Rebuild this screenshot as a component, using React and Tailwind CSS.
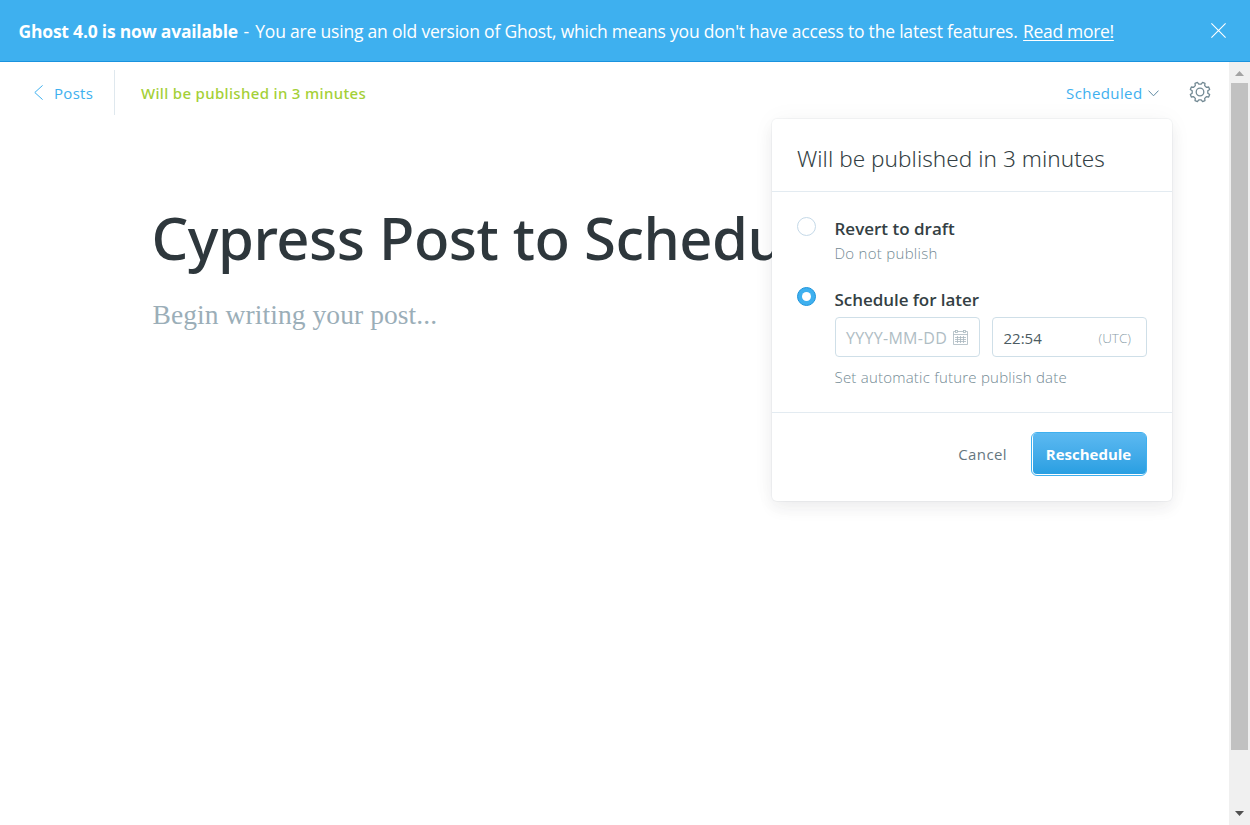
function Banner() {
  return (
    <div className="flex h-[62px] shrink-0 items-center justify-between border-b border-[#1a93de] bg-[#3eb0ef] pr-6 pl-[18.5px] text-[17.5px] whitespace-nowrap text-white">
      <p className="flex gap-[5.5px] pt-[2px]">
        <strong className="font-bold tracking-[-0.21px]">Ghost 4.0 is now available</strong>
        <span className="tracking-[-0.2px]">
          <span className="mr-[2px]">-</span> You are using an old version of Ghost, which means you don't have access to the latest features.
        </span>
        <a className="tracking-[-0.32px] underline decoration-1 underline-offset-2">Read more!</a>
      </p>
      <svg className="size-[15px]" viewBox="0 0 15 15" fill="none" stroke="currentColor" strokeWidth="1.1">
        <path d="M.4.4l14.2 14.2M14.6.4.4 14.6" />
      </svg>
    </div>
  );
}

const gearPath = (() => {
  const points = [];
  for (let i = 0; i < 8; i++) {
    const base = (i * Math.PI) / 4 + Math.PI / 8;
    [[-0.13, 10], [0.13, 10], [0.24, 7.9], [0.545, 7.9]].forEach(([offset, radius]) => {
      const angle = base + offset;
      points.push(`${(Math.cos(angle) * radius).toFixed(2)} ${(Math.sin(angle) * radius).toFixed(2)}`);
    });
  }
  return `M${points.join("L")}Z`;
})();

function GearIcon() {
  return (
    <svg className="size-[22px]" viewBox="-11 -11 22 22" fill="none" stroke="#738a94" strokeWidth="1.3" strokeLinejoin="round">
      <circle r="3.8" />
      <path d={gearPath} />
    </svg>
  );
}

function CalendarIcon() {
  return (
    <svg className="size-[15px]" viewBox="0 0 15 15" fill="none" stroke="#a9b8bf" strokeWidth="0.8">
      <path d="M.5 1.500h14v13H.5zM.5 4.500h14M4.500 6v7M7.500 6v7M10.500 6v7M2 7.500h11M2 9.500h11M2 11.500h11" />
      <rect x="2.5" y=".5" width="2" height="2" fill="#fff" />
      <rect x="10.500" y=".5" width="2" height="2" fill="#fff" />
    </svg>
  );
}

function Header() {
  return (
    <header className="flex h-[62px] items-center pr-[18px] pl-[34px] text-[15px] whitespace-nowrap">
      <a className="flex items-center text-[#3eb0ef]">
        <svg className="mr-[11px] mb-px h-[15px] w-[9px]" viewBox="0 0 9 15" fill="none" stroke="currentColor" strokeWidth="1">
          <path d="M8.6.4.8 7.5l7.8 7.1" />
        </svg>
        <span className="w-[39px] tracking-[0.3px]">Posts</span>
      </a>
      <span className="mb-[2px] ml-[21px] h-[45px] w-px bg-[#dfe8ee]" />
      <span className="ml-[26px] font-['Noto_Sans',sans-serif] font-medium tracking-[0.33px] text-[#a4d037]">
        Will be published in 3 minutes
      </span>
      <button className="ml-auto flex items-center text-[#3eb0ef]">
        <span className="tracking-[0.4px]">Scheduled</span>
        <svg className="mt-px ml-[5px] h-[7px] w-[11px]" viewBox="0 0 11 7" fill="none" stroke="#5f8aa3" strokeWidth="1">
          <path d="M.5.6l5 5.2 5-5.2" />
        </svg>
      </button>
      <button className="ml-[30.5px] pb-[2px]">
        <GearIcon />
      </button>
    </header>
  );
}

function Radio({ checked }) {
  return checked ? (
    <span className="-mt-px flex size-[19px] shrink-0 items-center justify-center rounded-full border border-[#1f95dc] bg-[#3eb0ef]">
      <span className="size-[9px] rounded-full bg-white" />
    </span>
  ) : (
    <span className="size-[19px] shrink-0 rounded-full border border-[#c5d9e8] bg-white" />
  );
}

function ScheduleMenu() {
  return (
    <section className="absolute top-[57px] left-[772px] w-[400px] rounded-[5px] bg-white whitespace-nowrap shadow-[0_0_0_1px_rgba(99,114,130,0.06),0_8px_16px_rgba(27,39,51,0.06),0_0_24px_rgba(27,39,51,0.04)]">
      <h2 className="h-[73px] border-b border-[#e3ebf1] pt-[23px] pl-[25px] font-['Noto_Sans',sans-serif] text-[22.5px] leading-[34px] font-light tracking-[0.06px] text-[#343f44]">
        Will be published in 3 minutes
      </h2>
      <div className="flex h-[221px] flex-col border-b border-[#e3ebf1] px-[25px] pt-[25px]">
        <div className="flex h-[71px] gap-[18.5px]">
          <Radio />
          <div>
            <p className="text-[17px] leading-6 font-semibold text-[#343f44]">Revert to draft</p>
            <p className="text-[15px] leading-[24px] font-light tracking-[0.28px] text-[#738a94]">Do not publish</p>
          </div>
        </div>
        <div className="flex gap-[18.5px]">
          <Radio checked />
          <div>
            <p className="text-[17px] leading-6 font-semibold tracking-[-0.05px] text-[#343f44]">Schedule for later</p>
            <div className="mt-[5px] -mr-px ml-[0.5px] flex gap-3 text-[15px]">
              <div className="flex h-10 w-[145px] items-center justify-between rounded-[4px] border border-[#cfdfe8] pr-[11px] pl-[10px]">
                <span className="mt-[2px] text-[16px] tracking-[0.3px] text-[#afbdc4]">YYYY-MM-DD</span>
                <CalendarIcon />
              </div>
              <div className="flex h-10 w-[155px] items-center justify-between rounded-[4px] border border-[#cfdfe8] pr-[15px] pl-[10.5px]">
                <span className="mt-[2px] text-[#4c5b62]">22:54</span>
                <span className="mt-[2px] text-[13.5px] font-light text-[#8b9ea8]">(UTC)</span>
              </div>
            </div>
            <p className="mt-[8px] text-[15px] leading-[24px] font-light tracking-[0.22px] text-[#738a94]">
              Set automatic future publish date
            </p>
          </div>
        </div>
      </div>
      <div className="flex h-[88px] justify-end pt-[19px] pr-[25px] text-[15px]">
        <button className="mr-[24px] h-[44px] tracking-[0.4px] text-[#66777f]">Cancel</button>
        <button className="flex h-[44px] w-[116px] rounded-[6px] border border-[#3eb0ef] bg-white p-px pt-0 pr-0">
          <span className="flex h-[41px] flex-1 items-center justify-center rounded-[4px] bg-linear-to-b from-[#5bb9f1] to-[#289fe2] pt-[2px] pr-[2px] font-bold text-white">
            Reschedule
          </span>
        </button>
      </div>
    </section>
  );
}

function Scrollbar() {
  return (
    <div className="flex w-[21px] shrink-0 flex-col items-center bg-[#f0f0f0]">
      <svg className="h-[21px] w-[9px]" viewBox="0 0 9 21" fill="#a3a3a3">
        <path d="M0 14 4.5 9 9 14Z" />
      </svg>
      <div className="h-[667px] w-[17px] bg-[#c1c1c1]" />
      <svg className="mt-auto h-[21px] w-[9px]" viewBox="0 0 9 21" fill="#505050">
        <path d="M0 7 4.500 12 9 7Z" />
      </svg>
    </div>
  );
}

export default function App() {
  return (
    <div className="flex h-screen flex-col overflow-hidden bg-white font-['Open_Sans','Noto_Sans',sans-serif]">
      <Banner />
      <div className="flex min-h-0 flex-1">
        <main className="relative min-w-0 flex-1">
          <Header />
          <article className="pt-[74px] pl-[151.5px]">
            <h1 className="h-[80px] w-[772px] overflow-hidden font-['Noto_Sans',sans-serif] text-[58px] leading-[80px] font-medium tracking-[-0.5px] whitespace-nowrap text-[#2e373c]">
              Cypress Post to Schedule
            </h1>
            <p className="mt-[19px] ml-px font-['Liberation_Serif',serif] text-[27.5px] leading-[36px] tracking-[0.08px] text-[#9baeb8]">
              Begin writing your post...
            </p>
          </article>
          <ScheduleMenu />
        </main>
        <Scrollbar />
      </div>
    </div>
  );
}
